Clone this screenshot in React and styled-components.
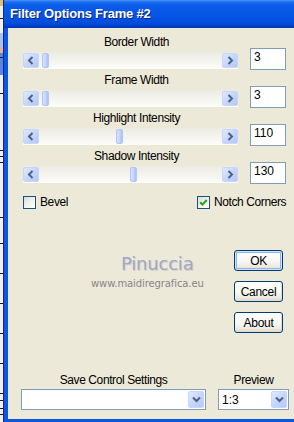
import React from "react";
import styled, { createGlobalStyle } from "styled-components";

const GlobalStyle = createGlobalStyle`
  html, body, #root {
    margin: 0;
    padding: 0;
    height: 100%;
  }
  body {
    font-family: "Liberation Sans", Arial, sans-serif;
    background: #ece9d8;
    overflow: hidden;
  }
`;

const Screen = styled.div`
  display: flex;
  width: 294px;
  height: 422px;
`;

const BehindStrip = styled.svg`
  display: block;
  flex: 0 0 3px;
`;

const Window = styled.div`
  flex: 1;
  min-width: 0;
  display: flex;
  flex-direction: column;
  border-left: 1px solid #0b2a8c;
`;

const TitleBar = styled.div`
  flex: 0 0 28px;
  box-sizing: border-box;
  display: flex;
  align-items: center;
  padding: 0 0 2px 6px;
  background: linear-gradient(
    180deg,
    #4a97fb 0px,
    #1f6ef2 2px,
    #0b5ce9 5px,
    #0555e6 16px,
    #034ddd 23px,
    #0240c8 26px,
    #0133a8 28px
  );
  color: #fff;
  font: bold 13px "Liberation Sans", Arial, sans-serif;
  letter-spacing: -0.2px;
  text-shadow: 1px 1px 0 #0a2478;
`;

const Frame = styled.div`
  flex: 1;
  position: relative;
  display: flex;
  flex-direction: column;
  background: #ece9d8;
  border-left: 4px solid #0b55e5;
  border-bottom: 3px solid #0b55e5;
  padding: 7px 8px 9px 15px;
  font-size: 12px;
  color: #000;
`;

const SliderList = styled.div`
  display: flex;
  flex-direction: column;
  gap: 4px;
`;

const SliderGroup = styled.div`
  display: grid;
  grid-template-columns: 215px 12px 36px;
  grid-template-rows: 14px 17px;
  row-gap: 3px;
`;

const SliderLabel = styled.div`
  grid-column: 1 / 3;
  grid-row: 1;
  text-align: center;
  line-height: 14px;
  letter-spacing: -0.4px;
`;

const Scrollbar = styled.div`
  grid-column: 1;
  grid-row: 2;
  position: relative;
  display: flex;
  justify-content: space-between;
  align-items: center;
  height: 17px;
  background: linear-gradient(180deg, #ecebe3 0%, #f3f2ec 45%, #fdfdfb 100%);
`;

const ArrowButton = styled.div`
  width: 16px;
  height: 15px;
  box-sizing: border-box;
  display: flex;
  align-items: center;
  justify-content: center;
  border: 1px solid #c6d6fc;
  border-radius: 2px;
  background: linear-gradient(135deg, #dfe8fe 0%, #c4d5fb 55%, #b3c8f6 100%);
`;

const Thumb = styled.div`
  position: absolute;
  top: 1px;
  width: 7px;
  height: 15px;
  box-sizing: border-box;
  border: 1px solid #b0c6f4;
  border-radius: 2px;
  background: linear-gradient(90deg, #d6e2fd 0%, #c2d3fb 60%, #aabfee 100%);
`;

const ValueBox = styled.div`
  grid-column: 3;
  grid-row: 1 / 3;
  align-self: end;
  margin-bottom: -1px;
  height: 22px;
  box-sizing: border-box;
  border: 1px solid #7f9db9;
  background: #fff;
  padding: 1px 3px 0;
  line-height: 14px;
  font-size: 12px;
`;

const CheckRow = styled.div`
  display: grid;
  grid-template-columns: 174px 1fr;
  margin-top: 13px;
  height: 13px;
`;

const CheckItem = styled.div`
  display: flex;
  align-items: center;
  gap: 4px;
  line-height: 13px;
  letter-spacing: -0.4px;
  white-space: nowrap;
`;

const CheckBox = styled.div`
  flex: 0 0 13px;
  width: 13px;
  height: 13px;
  box-sizing: border-box;
  display: flex;
  align-items: center;
  justify-content: center;
  border: 1px solid #1c5180;
  background: linear-gradient(135deg, #dcdcd7 0%, #f4f4f1 60%, #ffffff 100%);
`;

const Middle = styled.div`
  flex: 1;
  display: flex;
  justify-content: flex-end;
  padding: 41px 3px 0 0;
`;

const ButtonColumn = styled.div`
  display: flex;
  flex-direction: column;
  gap: 10px;
  width: 49px;
`;

const DialogButton = styled.button`
  height: 21px;
  width: 49px;
  box-sizing: border-box;
  padding: 0;
  border: 1px solid #003c74;
  border-radius: 3px;
  background: linear-gradient(180deg, #ffffff 0%, #f6f6f2 55%, #ebe8de 85%, #d8d2c6 100%);
  font: 12px "Liberation Sans", Arial, sans-serif;
  letter-spacing: -0.3px;
  color: #000;
  box-shadow: ${(p) =>
    p.$default
      ? "inset 0 0 0 1px #cfe0fb, inset 0 0 0 2px #94b4ee"
      : "inset -1px -1px 0 #e2ddd0"};
`;

const Watermark = styled.div`
  position: absolute;
  left: 83px;
  top: 226px;
  pointer-events: none;
`;

const WatermarkName = styled.div`
  padding-left: 30px;
  font: 18px "DejaVu Sans", sans-serif;
  line-height: 20px;
  color: #a3a7c5;
  text-shadow: 1px 1px 0 #d4d1c6;
  letter-spacing: -0.2px;
`;

const WatermarkUrl = styled.div`
  margin-top: 4px;
  font: 10px "DejaVu Sans", sans-serif;
  line-height: 12px;
  color: #85858e;
  letter-spacing: -0.1px;
`;

const BottomRow = styled.div`
  display: grid;
  grid-template-columns: 185px 71px;
  column-gap: 12px;
  margin: 0 -3px 0 -2px;
`;

const Field = styled.div`
  display: flex;
  flex-direction: column;
`;

const FieldLabel = styled.div`
  text-align: center;
  line-height: 14px;
  margin-bottom: 2px;
  letter-spacing: -0.4px;
`;

const Select = styled.div`
  height: 21px;
  box-sizing: border-box;
  display: flex;
  align-items: center;
  justify-content: space-between;
  border: 1px solid #7f9db9;
  background: #fff;
  padding: 1px 1px 1px 3px;
  font-size: 12px;
`;

const DropButton = styled(ArrowButton)`
  width: 16px;
  height: 17px;
`;

function Chevron({ dir }) {
  const paths = {
    left: "M5.5 1 L2 4.5 L5.5 8",
    right: "M2.5 1 L6 4.5 L2.5 8",
    down: "M1 2.5 L4.5 6 L8 2.5",
  };
  return (
    <svg width="9" height="9" viewBox="0 0 9 9">
      <path d={paths[dir]} fill="none" stroke="#4d6185" strokeWidth="2" />
    </svg>
  );
}

function Slider({ label, value }) {
  return (
    <SliderGroup>
      <SliderLabel>{label}</SliderLabel>
      <Scrollbar>
        <ArrowButton>
          <Chevron dir="left" />
        </ArrowButton>
        <Thumb style={{ left: 17 + value * 0.69 }} />
        <ArrowButton>
          <Chevron dir="right" />
        </ArrowButton>
      </Scrollbar>
      <ValueBox>{value}</ValueBox>
    </SliderGroup>
  );
}

const sliders = [
  { label: "Border Width", value: 3 },
  { label: "Frame Width", value: 3 },
  { label: "Highlight Intensity", value: 110 },
  { label: "Shadow Intensity", value: 130 },
];

const ticks = [18, 57, 93, 150, 156, 162, 217, 243, 273, 303, 333, 363, 393, 400, 408, 414];

export default function App() {
  return (
    <>
      <GlobalStyle />
      <Screen>
        <BehindStrip width="3" height="422" viewBox="0 0 3 422">
          <rect x="0" y="0" width="3" height="422" fill="#f1f0ea" />
          <rect x="0" y="0" width="3" height="6" fill="#e6c06a" />
          <rect x="0" y="33" width="3" height="14" fill="#a9c2ec" />
          <rect x="0" y="47" width="3" height="6" fill="#e6b0a0" />
          <rect x="0" y="53" width="3" height="22" fill="#5a86e0" />
          {ticks.map((y) => (
            <rect key={y} x="0" y={y} width="3" height="1" fill="#1a1a1a" />
          ))}
        </BehindStrip>
        <Window>
          <TitleBar>Filter Options Frame #2</TitleBar>
          <Frame>
            <SliderList>
              {sliders.map((s) => (
                <Slider key={s.label} label={s.label} value={s.value} />
              ))}
            </SliderList>
            <CheckRow>
              <CheckItem>
                <CheckBox />
                Bevel
              </CheckItem>
              <CheckItem>
                <CheckBox>
                  <svg width="9" height="9" viewBox="0 0 9 9">
                    <path
                      d="M1.2 4.2 L3.5 6.6 L7.8 2"
                      fill="none"
                      stroke="#21a121"
                      strokeWidth="2"
                    />
                  </svg>
                </CheckBox>
                Notch Corners
              </CheckItem>
            </CheckRow>
            <Middle>
              <ButtonColumn>
                <DialogButton $default>OK</DialogButton>
                <DialogButton>Cancel</DialogButton>
                <DialogButton>About</DialogButton>
              </ButtonColumn>
            </Middle>
            <BottomRow>
              <Field>
                <FieldLabel>Save Control Settings</FieldLabel>
                <Select>
                  <span />
                  <DropButton>
                    <Chevron dir="down" />
                  </DropButton>
                </Select>
              </Field>
              <Field>
                <FieldLabel>Preview</FieldLabel>
                <Select>
                  <span>1:3</span>
                  <DropButton>
                    <Chevron dir="down" />
                  </DropButton>
                </Select>
              </Field>
            </BottomRow>
            <Watermark>
              <WatermarkName>Pinuccia</WatermarkName>
              <WatermarkUrl>www.maidiregrafica.eu</WatermarkUrl>
            </Watermark>
          </Frame>
        </Window>
      </Screen>
    </>
  );
}
